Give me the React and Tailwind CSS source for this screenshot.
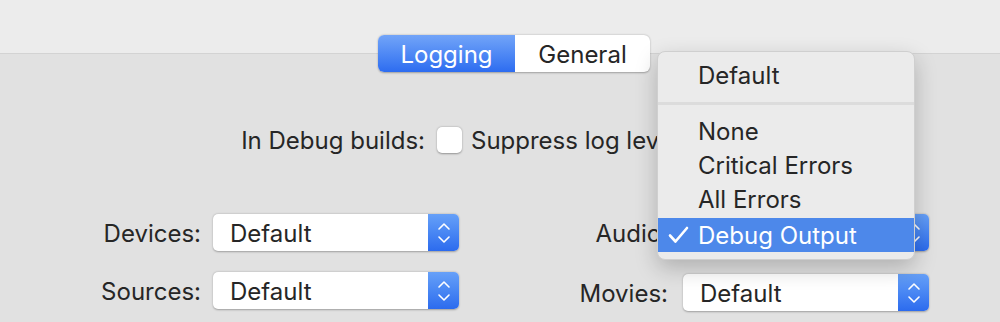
import React from 'react';

const Stepper = () => (
  <div className="w-[31px] h-full rounded-r-[5px] bg-gradient-to-b from-[#66a0f8] to-[#2c6bee] flex items-center justify-center">
    <svg width="14" height="26" viewBox="0 0 14 26" fill="none" stroke="white" strokeWidth="1.6" strokeLinecap="round" strokeLinejoin="round">
      <path d="M2 9 L7 4 L12 9" />
      <path d="M2 17 L7 22 L12 17" />
    </svg>
  </div>
);

const Popup = ({ value = 'Default' }) => (
  <div className="flex h-[37px] w-[246px] rounded-[5px] bg-white shadow-[0_0.5px_2px_rgba(0,0,0,0.3)]">
    <div className="flex-1 pl-[17px] pt-[2px] flex items-center">{value}</div>
    <Stepper />
  </div>
);

const PopupRow = ({ left, right, hidden, shift }) => (
  <div className="flex items-start">
    <div className="w-[201px] h-[37px] flex items-center justify-end pt-[2px]">{left}</div>
    <div className="ml-[12px]"><Popup /></div>
    <div className={`w-[209px] h-[37px] flex items-center justify-end pt-[2px] ${shift ? 'mt-[2px]' : ''}`}>{right}</div>
    <div className={`ml-[15px] ${shift ? 'mt-[2px]' : ''}`}><Popup value={hidden ? '' : 'Default'} /></div>
  </div>
);

const MenuItem = ({ children, selected }) => (
  <div className={`h-[34px] flex items-center pl-[40px] pt-[2px] relative ${selected ? 'bg-[#4d88ea] text-white' : ''}`}>
    {selected && (
      <svg className="absolute left-[10px] top-[8px]" width="22" height="18" viewBox="0 0 22 18" fill="none" stroke="white" strokeWidth="2.6" strokeLinecap="round" strokeLinejoin="round">
        <path d="M2 9.5 L7.5 15.5 L19 2" />
      </svg>
    )}
    {children}
  </div>
);

export default function App() {
  return (
    <div className="relative w-[1000px] h-[322px] overflow-hidden bg-[#e1e1e1] text-[#262626] font-['Inter',sans-serif] text-[24px] leading-none">
      <div className="h-[54px] bg-[#ececec] border-b border-[#d3d3d3]" />

      <div className="-mt-[19px] ml-[378px] flex w-[272px] h-[37px] rounded-[6px] bg-white shadow-[0_0.5px_2px_rgba(0,0,0,0.3)]">
        <div className="w-[137px] rounded-l-[6px] bg-gradient-to-b from-[#72a4f8] to-[#2d6cf0] text-white flex items-center justify-center pt-[2px]">Logging</div>
        <div className="flex-1 flex items-center justify-center pt-[2px]">General</div>
      </div>

      <div className="mt-[55px] flex items-center h-[26px]">
        <div className="w-[425px] text-right pt-[2px]">In Debug builds:</div>
        <div className="ml-[12px] w-[25px] h-[26px] rounded-[5px] bg-white shadow-[0_0.5px_2px_rgba(0,0,0,0.35)]" />
        <div className="ml-[9px] pt-[2px]">Suppress log levels</div>
      </div>

      <div className="mt-[61px] flex flex-col gap-[21px]">
        <PopupRow left="Devices:" right="Audio:" hidden />
        <PopupRow left="Sources:" right="Movies:" shift />
      </div>

      <div className="absolute left-[657px] top-[51px] w-[258px] h-[209px] rounded-[8px] bg-[#ebebeb] border border-[#cfcfcf] shadow-[0_8px_22px_rgba(0,0,0,0.22)] pt-[6px] overflow-hidden">
        <MenuItem>Default</MenuItem>
        <div className="h-[22px] flex items-center">
          <div className="w-full h-[3px] bg-[#dcdcdc]" />
        </div>
        <MenuItem>None</MenuItem>
        <MenuItem>Critical Errors</MenuItem>
        <MenuItem>All Errors</MenuItem>
        <div className="mt-[2px]">
          <MenuItem selected>Debug Output</MenuItem>
        </div>
      </div>
    </div>
  );
}
